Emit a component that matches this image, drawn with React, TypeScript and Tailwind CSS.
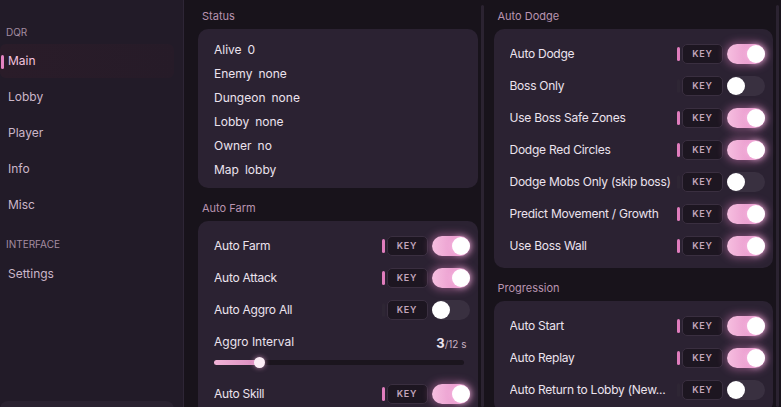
import React from 'react';
import clsx from 'clsx';

type ToggleRow = { label: string; on: boolean };

const STATUS = [
  ['Alive', '0'],
  ['Enemy', 'none'],
  ['Dungeon', 'none'],
  ['Lobby', 'none'],
  ['Owner', 'no'],
  ['Map', 'lobby'],
];

const AUTO_DODGE: ToggleRow[] = [
  { label: 'Auto Dodge', on: true },
  { label: 'Boss Only', on: false },
  { label: 'Use Boss Safe Zones', on: true },
  { label: 'Dodge Red Circles', on: true },
  { label: 'Dodge Mobs Only (skip boss)', on: false },
  { label: 'Predict Movement / Growth', on: true },
  { label: 'Use Boss Wall', on: true },
];

const PROGRESSION: ToggleRow[] = [
  { label: 'Auto Start', on: true },
  { label: 'Auto Replay', on: true },
  { label: 'Auto Return to Lobby (New...', on: false },
];

const NAV = ['Main', 'Lobby', 'Player', 'Info', 'Misc'];

const Toggle: React.FC<{ on: boolean }> = ({ on }) => (
  <div
    className={clsx(
      'relative h-[20px] w-[38px] shrink-0 rounded-full',
      on
        ? 'bg-linear-to-r from-[#f6bfe0] to-[#e183c2] shadow-[0_0_9px_2px_rgba(226,128,196,0.45)]'
        : 'bg-[#393040]'
    )}
  >
    <div
      className={clsx(
        'absolute top-[1px] h-[18px] w-[18px] rounded-full bg-white',
        on ? 'right-0 shadow-[0_0_6px_rgba(255,200,235,0.8)]' : 'left-0'
      )}
    />
  </div>
);

const Row: React.FC<ToggleRow> = ({ label, on }) => (
  <div className="flex h-[32px] items-center pl-[16px] pr-[8px]">
    <span className="min-w-0 flex-1 truncate text-[12px] tracking-[-0.25px] text-[#ece3ee]">{label}</span>
    <div className="ml-[4px] flex items-center">
      <span className={clsx('h-[14px] w-[3px] rounded-full', on ? 'bg-[#e07dbd]' : 'bg-[#2e2634]')} />
      <button className="ml-[2px] h-[20px] w-[41px] rounded-[5px] border border-[#3a2f40] bg-[#1d1621] text-[9px] font-semibold tracking-[0.08em] text-[#c3a6bc]">
        KEY
      </button>
      <div className="ml-[4px]">
        <Toggle on={on} />
      </div>
    </div>
  </div>
);

const Section: React.FC<{ title: string; className?: string; children: React.ReactNode }> = ({
  title,
  className,
  children,
}) => (
  <div className={className}>
    <div className="mb-[5px] h-[16px] pl-[4px] text-[11px] leading-[16px] text-[#b994b0]">{title}</div>
    <div className="rounded-[10px] bg-[#2b2232] pb-[6px] pt-[9px]">{children}</div>
  </div>
);

const Scrollbar = () => <div className="ml-[3px] mt-[5px] w-[3px] shrink-0 rounded-full bg-[#2b2331]" />;

const App: React.FC = () => {
  return (
    <div className="flex h-[407px] w-[781px] overflow-hidden bg-[#18131b] font-['Inter',sans-serif]">
      {/* sidebar */}
      <aside className="relative flex w-[184px] shrink-0 flex-col border-r border-[#2e2636] bg-[#221b28] pr-[9px] pt-[24px]">
        <div className="h-[16px] pl-[6px] text-[10px] leading-[16px] text-[#a48ca0]">DQR</div>
        <nav className="mt-[4px] flex flex-col gap-[2px]">
          {NAV.map((item, i) => (
            <div
              key={item}
              className={clsx(
                'relative flex h-[34px] items-center rounded-[6px] pl-[8px] text-[12px]',
                i === 0 ? 'bg-linear-to-r from-[#2a1c29] to-[#261b28] text-[#f2c3df]' : 'text-[#cbb6c8]'
              )}
            >
              {i === 0 && <span className="absolute left-[1px] top-[11px] h-[14px] w-[3px] rounded-full bg-[#e583c2]" />}
              {item}
            </div>
          ))}
        </nav>
        <div className="mt-[14px] h-[16px] pl-[6px] text-[10px] leading-[16px] text-[#a48ca0]">INTERFACE</div>
        <div className="mt-[5px] flex h-[34px] items-center pl-[8px] text-[12px] text-[#cbb6c8]">Settings</div>
        <div className="absolute bottom-[-20px] left-0 h-[26px] w-[174px] rounded-[8px] bg-[#2a2230]" />
      </aside>

      {/* main columns */}
      <main className="flex min-w-0 flex-1 gap-[10px] pl-[14px] pr-[2px]">
        <div className="flex min-w-0 flex-1">
          <div className="min-w-0 flex-1 pt-[8px]">
            <Section title="Status">
              {STATUS.map(([k, v]) => (
                <div key={k} className="flex h-[24px] items-center pl-[16px] text-[12px] text-[#ece3ee]">
                  <span>{k}</span>
                  <span className="ml-[6px]">{v}</span>
                </div>
              ))}
            </Section>
            <Section title="Auto Farm" className="mt-[12px]">
              <Row label="Auto Farm" on />
              <Row label="Auto Attack" on />
              <Row label="Auto Aggro All" on={false} />
              <div className="h-[52px] pl-[16px] pr-[14px] pt-[6px]">
                <div className="flex h-[20px] items-end justify-between text-[#ece3ee]">
                  <span className="text-[12px] leading-[20px]">Aggro Interval</span>
                  <span className="-mr-[3px] leading-[16px]">
                    <span className="text-[13px] font-bold">3</span>
                    <span className="text-[10px] text-[#c8b2c3]">/12 s</span>
                  </span>
                </div>
                <div className="relative mt-[8px] h-[5px] rounded-full bg-[#1b151e]">
                  <div className="absolute left-0 top-0 h-[5px] w-[46px] rounded-full bg-linear-to-r from-[#f1b3d7] to-[#d98abd]" />
                  <div className="absolute left-[40px] top-[-3px] h-[11px] w-[11px] rounded-full bg-[#fbeef6] shadow-[0_0_5px_rgba(240,170,215,0.7)]" />
                </div>
              </div>
              <Row label="Auto Skill" on />
            </Section>
          </div>
          <Scrollbar />
        </div>

        <div className="flex min-w-0 flex-1">
          <div className="min-w-0 flex-1 pt-[8px]">
            <Section title="Auto Dodge">
              {AUTO_DODGE.map((r) => (
                <Row key={r.label} {...r} />
              ))}
            </Section>
            <Section title="Progression" className="mt-[12px]">
              {PROGRESSION.map((r) => (
                <Row key={r.label} {...r} />
              ))}
            </Section>
          </div>
          <Scrollbar />
        </div>
      </main>
    </div>
  );
};

export default App;
